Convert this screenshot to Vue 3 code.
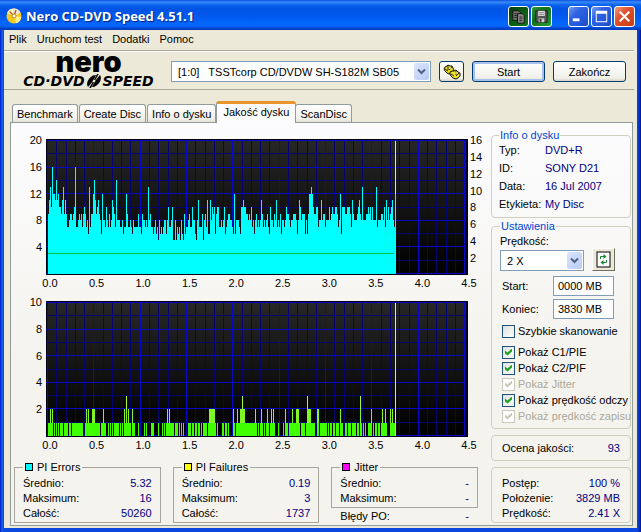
<script setup>
import { ref } from 'vue'

const menu = ['Plik', 'Uruchom test', 'Dodatki', 'Pomoc']
const tabs = ['Benchmark', 'Create Disc', 'Info o dysku', 'Jakość dysku', 'ScanDisc']
const activeTab = ref('Jakość dysku')
const drive = '[1:0]\u00a0\u00a0 TSSTcorp CD/DVDW SH-S182M SB05'

const xTicks = ['0.0', '0.5', '1.0', '1.5', '2.0', '2.5', '3.0', '3.5', '4.0', '4.5']

// One hexadecimal digit per sample; g stands for 16.
const errorSamples = (
  '9bdagccbebcaa9bd9b97789989' + 'ag77898979a9786d799ceb9ab9' + '86c887a87978ba97e8887786' +
  '77c97787687777977698878' + '7d8977678675867678868a778a' + '558576758659677897' +
  '7a88658b77795897b66b8a9a' + '69aa77878a678998876c68887' +
  '6aabaa99898a78689787' + '8b97878976a88798b787968878a9' + '987889998' + '68ba8999686' +
  '9ccdca99aa788b89978' + '88a89a99aa978c6aaa99aaa97b988' + '89ab98d88899a9a8a888d7888998a7b8a89ab87c88'
).split('').map((c) => (c === 'g' ? 16 : parseInt(c, 16))).slice(0, 348)

const gaps = new Set([
  5, 7, 9, 11, 15, 20, 23, 35, 36, 52, 58, 59, 61, 63, 65, 71, 73, 75, 83, 87, 88, 89, 91, 92, 93, 94, 95, 97,
  99, 100, 101, 102, 106, 107, 108, 109, 111, 112, 113, 115, 117, 126, 130, 132, 134, 136, 137, 138, 139,
  143, 146, 149, 152, 154, 159, 168, 170, 171, 172, 173, 176, 179, 181, 182, 183, 184, 187, 209, 211, 215,
  217, 221, 227, 228, 229, 231, 232, 233, 234, 236, 240, 252, 257, 267, 268, 271, 279, 281, 284, 287, 291,
  295, 296, 299, 303, 308, 311, 314, 316, 318, 319, 324, 326, 329, 332, 339, 340, 341
])
const twos = new Set([
  2, 4, 38, 40, 44, 45, 46, 55, 76, 80, 84, 119, 121, 161, 162, 163, 164, 165, 166, 185, 189, 192, 193, 195,
  196, 207, 213, 219, 223, 225, 237, 244, 248, 249, 250, 260, 261, 262, 269, 270, 292, 323, 334, 337, 342, 344
])
const threes = new Set([78, 194, 259, 312])
const failureSamples = Array.from({ length: 348 }, (_, i) =>
  threes.has(i) ? 3 : twos.has(i) ? 2 : gaps.has(i) ? 0 : 1
)

function steps(samples, unit, cap = 99) {
  let d = 'M2 135'
  samples.forEach((v, i) => {
    d += `V${135 - Math.round(Math.min(v, cap) * unit)}H${i + 3}`
  })
  return d + 'V135Z'
}

const columns = Array.from({ length: 46 }, (_, i) => ({ at: Math.round(2 + i * 9.27), major: i % 5 === 0 }))
const rows = Array.from({ length: 11 }, (_, i) => ({ at: Math.round(2 + i * 13.3), major: i % 2 === 0 }))

const charts = [
  {
    id: 'pie',
    left: ['20', '16', '12', '8', '4'],
    right: ['16', '14', '12', '10', '8', '6', '4', '2'],
    layers: [{ d: steps(errorSamples, 6.7), fill: '#00ffff' }],
    speed: true
  },
  {
    id: 'pif',
    left: ['10', '8', '6', '4', '2'],
    right: [],
    layers: [
      { d: steps(failureSamples, 13.3), fill: '#a8f840' },
      { d: steps(failureSamples, 13.3, 2), fill: '#80f828' },
      { d: steps(failureSamples, 13.3, 1), fill: '#40ff00' }
    ],
    speed: false
  }
]

const stats = [
  { name: 'PI Errors', tone: 'cyan', rows: [['Średnio:', '5.32'], ['Maksimum:', '16'], ['Całość:', '50260']] },
  { name: 'PI Failures', tone: 'yellow', rows: [['Średnio:', '0.19'], ['Maksimum:', '3'], ['Całość:', '1737']] },
  { name: 'Jitter', tone: 'magenta', rows: [['Średnio:', '-'], ['Maksimum:', '-']], extra: ['Błędy PO:', '-'] }
]

const disc = [['Typ:', 'DVD+R'], ['ID:', 'SONY D21'], ['Data:', '16 Jul 2007'], ['Etykieta:', 'My Disc']]
const progress = [['Postęp:', '100 %'], ['Położenie:', '3829 MB'], ['Prędkość:', '2.41 X']]

const start = ref('0000 MB')
const end = ref('3830 MB')
const options = ref([
  { label: 'Szybkie skanowanie', on: false, off: false },
  { label: 'Pokaż C1/PIE', on: true, off: false },
  { label: 'Pokaż C2/PIF', on: true, off: false },
  { label: 'Pokaż Jitter', on: true, off: true },
  { label: 'Pokaż prędkość odczy', on: true, off: false },
  { label: 'Pokaż prędkość zapisu', on: true, off: true }
])
</script>

<template>
  <div class="window">
    <header class="titlebar">
      <svg class="app-icon" viewBox="0 0 16 16" aria-hidden="true">
        <circle cx="8" cy="8" r="7.5" fill="#f4c81c" />
        <path d="M8 8L1 5A7.5 7.5 0 0 1 7 .6Z" fill="#fff6c0" />
        <path d="M8 8L7 .6A7.5 7.5 0 0 1 14.500 4.500Z" fill="#f2e8e0" />
        <path d="M8 8L15.400 9A7.500 7.500 0 0 1 10 15.300Z" fill="#fff08a" />
        <path d="M8 8L3.500 3.500M8 8L10 2" stroke="#b0502c" stroke-width="1.300" />
        <circle cx="8" cy="8" r="2" fill="#fff" stroke="#b88a10" />
      </svg>
      <h1>Nero CD-DVD Speed 4.51.1</h1>
      <div class="captions">
        <button class="cap green dark" aria-label="Kopiuj">
          <svg viewBox="0 0 20 20"><path d="M4 4h6l2 2v8H4z" fill="#777" stroke="#111" /><path d="M9 7h5l2 2v8H9z" fill="#888" stroke="#111" /><path d="M5.500 7h3M5.500 9h3M5.500 11h3M11 10.500h3M11 12.500h3M11 14.500h3" stroke="#222" /></svg>
        </button>
        <button class="cap green" aria-label="Zapisz">
          <svg viewBox="0 0 20 20"><path d="M4 4h12v12H5l-1-1z" fill="#555" stroke="#222" /><path d="M6.500 4h7v5.500h-7z" fill="#d8d8d8" /><path d="M7.500 6h5M7.500 8h5" stroke="#888" /><path d="M7 12h6v4H7z" fill="#ccc" /><path d="M8 12.500h2v3H8z" fill="#333" /></svg>
        </button>
        <span class="cap-space"></span>
        <button class="cap" aria-label="Minimalizuj">
          <svg viewBox="0 0 20 20"><path d="M4 12h7v3H4z" fill="#fff" /></svg>
        </button>
        <button class="cap" aria-label="Maksymalizuj">
          <svg viewBox="0 0 20 20"><path d="M4 4h12v12H4zM5 7v8h10V7z" fill="#fff" fill-rule="evenodd" /></svg>
        </button>
        <button class="cap close" aria-label="Zamknij">
          <svg viewBox="0 0 20 20"><path d="M5 5L15 15M15 5L5 15" stroke="#fff" stroke-width="2.200" /></svg>
        </button>
      </div>
    </header>

    <div class="client">
      <nav class="menu">
        <a v-for="m in menu" :key="m" href="#">{{ m }}</a>
      </nav>

      <div class="toolbar">
        <div class="logo">
          <span class="brand">nero</span>
          <span class="product">
            <span>CD·DVD</span>
            <svg viewBox="0 0 16 14" aria-hidden="true">
              <path d="M2 13C-1 9 4 1 10 1L7 7zM14 1C17 5 12 13 6 13L9 7z" fill="#000" />
              <path d="M12 0L4 14" stroke="#000" stroke-width="1.500" />
              <circle cx="8" cy="7" r="1.300" fill="#ece9d8" />
            </svg>
            <span>SPEED</span>
          </span>
        </div>
        <div class="combo drive">
          <select aria-label="Napęd"><option>{{ drive }}</option></select>
          <span class="arrow"><svg viewBox="0 0 9 7"><path d="M1 1.500L4.500 5L8 1.500" fill="none" stroke="#4d6185" stroke-width="2" /></svg></span>
        </div>
        <button class="btn icon-btn" aria-label="Opcje">
          <svg viewBox="0 0 18 16">
            <path d="M2 3l2-1 1-1 2 1 2 0 1 2 1 2-1 2-2 2-2 0-2-1-2-2-1-2z" fill="#e8dc20" stroke="#111" />
            <path d="M7 8l2-1 2 0 2-1 2 2 2 1 0 3-2 2-2 1-3-1-2-2-1-2z" fill="#f0e428" stroke="#111" />
            <path d="M5 2v4M9 3l-3 3M13 7v4M16 9l-3 3M2 5l3 2M8 10l3 2" stroke="#332c00" />
            <path d="M6 4h2M12 9h2" stroke="#fffcc0" />
          </svg>
        </button>
        <button class="btn default">Start</button>
        <button class="btn">Zakończ</button>
      </div>

      <div class="tabs" role="tablist">
        <button
          v-for="t in tabs" :key="t" role="tab" class="tab"
          :class="{ active: t === activeTab }" :aria-selected="t === activeTab" @click="activeTab = t"
        >{{ t }}</button>
      </div>

      <main class="panel">
        <section class="results">
          <div v-for="c in charts" :key="c.id" class="chart">
            <div class="axis left"><span v-for="l in c.left" :key="l">{{ l }}</span></div>
            <svg class="plot" viewBox="0 0 422 136" preserveAspectRatio="none" shape-rendering="crispEdges">
              <defs>
                <linearGradient :id="c.id + '-bg'" x1="0" y1="0" x2="0" y2="1">
                  <stop offset="0" stop-color="#262626" /><stop offset="1" stop-color="#000" />
                </linearGradient>
              </defs>
              <rect width="422" height="136" fill="#000014" />
              <rect x="2" y="2" width="418" height="133" :fill="`url(#${c.id}-bg)`" />
              <g v-for="major in [false, true]" :key="String(major)" :fill="major ? '#0808c4' : '#04046c'">
                <rect v-for="x in columns.filter((g) => g.major === major)" :key="'x' + x.at" :x="x.at - 1" y="2" width="1" height="133" />
                <rect v-for="y in rows.filter((g) => g.major === major)" :key="'y' + y.at" x="0" :y="y.at - 1" width="420" height="1" />
              </g>
              <rect x="0" y="0" width="422" height="1" fill="#000014" />
              <rect x="420" y="0" width="2" height="136" fill="#000014" />
              <path v-for="l in c.layers" :key="l.fill" :d="l.d" :fill="l.fill" />
              <rect x="0" y="135" width="422" height="1" fill="#000014" />
              <rect v-if="c.speed" x="2" y="114" width="346" height="1" fill="#00c83c" />
              <rect x="349" y="2" width="1" :height="c.speed ? 53 : 133" fill="#dcdcd4" />
            </svg>
            <div class="axis right"><span v-for="l in c.right" :key="l">{{ l }}</span></div>
            <div class="axis bottom"><span v-for="l in xTicks" :key="l">{{ l }}</span></div>
          </div>

          <div class="stats">
            <div v-for="s in stats" :key="s.name" class="stat">
              <fieldset class="square">
                <legend><i class="swatch" :class="s.tone"></i>{{ s.name }}</legend>
                <p v-for="r in s.rows" :key="r[0]" class="pair"><span>{{ r[0] }}</span><b>{{ r[1] }}</b></p>
              </fieldset>
              <p v-if="s.extra" class="pair extra"><span>{{ s.extra[0] }}</span><b>{{ s.extra[1] }}</b></p>
            </div>
          </div>
        </section>

        <aside class="side">
          <fieldset class="info">
            <legend>Info o dysku</legend>
            <p v-for="r in disc" :key="r[0]"><span>{{ r[0] }}</span><b>{{ r[1] }}</b></p>
          </fieldset>

          <fieldset class="settings">
            <legend>Ustawienia</legend>
            <label for="speed">Prędkość:</label>
            <div class="speed-row">
              <div class="combo">
                <select id="speed"><option>2 X</option></select>
                <span class="arrow"><svg viewBox="0 0 9 7"><path d="M1 1.500L4.500 5L8 1.500" fill="none" stroke="#4d6185" stroke-width="2" /></svg></span>
              </div>
              <button class="refresh" aria-label="Odśwież">
                <svg viewBox="0 0 15 17">
                  <rect x="1" y="1" width="13" height="15" fill="#fff" stroke="#000" />
                  <path d="M4.500 8V5.500H8M10.500 9v2.500H7" fill="none" stroke="#188830" />
                  <path d="M7.500 3L10.500 5.500L7.500 8zM7.500 9L4.500 11.500l3 2.500z" fill="#188830" />
                </svg>
              </button>
            </div>
            <div class="fields">
              <div class="field"><label for="start">Start:</label><input id="start" v-model="start" type="text"></div>
              <div class="field"><label for="end">Koniec:</label><input id="end" v-model="end" type="text"></div>
            </div>
            <div class="checks">
              <label v-for="o in options" :key="o.label" :class="{ off: o.off }">
                <input v-model="o.on" type="checkbox" :disabled="o.off"><span>{{ o.label }}</span>
              </label>
            </div>
          </fieldset>

          <div class="box"><p class="pair"><span>Ocena jakości:</span><b>93</b></p></div>
          <div class="box progress">
            <p v-for="r in progress" :key="r[0]" class="pair"><span>{{ r[0] }}</span><b>{{ r[1] }}</b></p>
          </div>
        </aside>
      </main>
    </div>
  </div>
</template>

<style>
body { margin: 0; background: #ece9d8; }
</style>

<style scoped>
* { box-sizing: border-box; }
.window {
  min-height: 100vh;
  display: flex;
  flex-direction: column;
  padding: 0 4px 4px;
  background: linear-gradient(90deg, #0019cf 0, #1660e8 2px, #0a48e0 4px, #0a48e0 calc(100% - 4px), #0838c8 calc(100% - 2px), #00138c 100%);
  font: 11px/14px "Liberation Sans", Arial, sans-serif;
  color: #000;
}
button, input, select { font: inherit; color: inherit; margin: 0; }
p { margin: 0; }
b { font-weight: normal; color: #000080; }

.titlebar {
  height: 30px;
  margin: 0 -4px;
  padding: 2px 6px 0;
  display: flex;
  align-items: center;
  background: linear-gradient(#0a4be0 0, #3a8cf8 2px, #0a62ee 5px, #0054e3 9px, #0058ee 16px, #0366fc 23px, #0564f8 26px, #0048d0 28px, #0038b8 30px);
}
.app-icon { width: 16px; height: 16px; }
h1 {
  flex: 1;
  margin: 0 0 0 4px;
  font: bold 13px/18px "Open Sans", sans-serif;
  color: #fff;
  text-shadow: 1px 1px 1px #0a1f80;
}
.captions { display: flex; gap: 2px; }
.cap-space { width: 12px; }
.cap {
  width: 21px;
  height: 21px;
  padding: 0;
  border: 1px solid #fff;
  border-radius: 3px;
  background: linear-gradient(135deg, #7a9cf0, #2f63e4 35%, #2358d8 70%, #1a4cc0);
}
.cap svg { display: block; width: 19px; height: 19px; }
.cap.green { background: linear-gradient(135deg, #2c9838, #107018 40%, #28a034); }
.cap.green.dark { background: linear-gradient(135deg, #083c10, #0c5c14 50%, #107820); }
.cap.close { background: linear-gradient(135deg, #f09c80, #e0502c 40%, #c83c14); }

.client { flex: 1; display: flex; flex-direction: column; background: #ece9d8; }
.menu {
  height: 21px;
  display: flex;
  align-items: center;
  gap: 10px;
  margin-right: 3px;
  padding: 0 5px 2px;
  border-bottom: 1px solid #aca899;
}
.menu a { color: inherit; text-decoration: none; }
.toolbar {
  display: flex;
  align-items: center;
  gap: 8px;
  height: 39px;
  margin-right: 3px;
  padding: 2px 8px 0 10px;
  border-top: 1px solid #fff;
  border-bottom: 1px solid #aca899;
}
.logo { width: 149px; display: flex; flex-direction: column; align-items: center; }
.brand { height: 21px; margin-top: -2px; font: 900 29px/20px Inter, "Liberation Sans", sans-serif; }
.product { display: flex; align-items: center; gap: 1px; font: italic bold 14px/16px "DejaVu Sans", sans-serif; }
.product svg { width: 16px; height: 14px; }

.combo { position: relative; display: flex; }
.drive { flex: 1; min-width: 0; }
.combo select {
  appearance: none;
  width: 100%;
  height: 21px;
  padding: 0 18px 0 6px;
  border: 1px solid #7f9db9;
  border-radius: 0;
  background: #fff;
}
.arrow {
  position: absolute;
  top: 2px;
  right: 2px;
  bottom: 2px;
  width: 15px;
  display: flex;
  align-items: center;
  justify-content: center;
  border-radius: 2px;
  background: linear-gradient(135deg, #dce6fd, #b8cbf6);
  pointer-events: none;
}
.arrow svg { width: 9px; height: 7px; }
.btn {
  width: 73px;
  height: 21px;
  padding: 0;
  border: 1px solid #003c74;
  border-radius: 3px;
  background: linear-gradient(#fff, #f0f0ea 85%, #d6d0c5);
}
.btn.default { box-shadow: inset 0 0 0 2px #a8c0ee; }
.icon-btn { width: 25px; }
.icon-btn svg { display: block; width: 18px; height: 16px; margin: 0 auto; }

.tabs { display: flex; align-items: flex-end; height: 32px; padding-left: 8px; position: relative; }
.tab {
  height: 18px;
  padding: 0 4px;
  margin-right: 1px;
  border: 1px solid #919b9c;
  border-bottom: 0;
  border-radius: 3px 3px 0 0;
  background: linear-gradient(#fff, #f0efe8 80%, #e4e2d8);
}
.tab.active {
  height: 22px;
  margin: 0 -1px -1px;
  padding: 0 6px 4px;
  border-top: 3px solid #e8952c;
  background: #fcfcfe;
}
.panel {
  flex: 1;
  display: flex;
  margin: 0 4px 2px 6px;
  border: 1px solid #919b9c;
  background: linear-gradient(#fcfcfe, #f4f3ee 60%);
}
.results { flex: 1; min-width: 0; padding-top: 16px; display: flex; flex-direction: column; }
.chart { display: grid; grid-template-columns: 35px 1fr 23px; margin-bottom: 10px; }
.plot { width: 100%; height: 136px; display: block; }
.axis { display: flex; justify-content: space-between; }
.axis.left { flex-direction: column; height: 121px; margin-top: -6px; padding-right: 4px; text-align: right; }
.axis.right { flex-direction: column; height: 132px; margin-top: -6px; padding-left: 2px; }
.axis.bottom { grid-column: 2; margin: 1px -9px 1px -4px; }
.axis.bottom span { width: 16px; text-align: center; }

.stats { display: grid; grid-template-columns: repeat(3, 1fr); gap: 12px; padding: 0 13px 0 3px; margin-top: -3px; }
fieldset { min-width: 0; margin: 0; }
.square { border: 1px solid #a8a69c; padding: 2px 8px 1px; }
.square legend { display: flex; align-items: center; gap: 4px; padding: 0 2px; }
.swatch { width: 8px; height: 8px; border: 1px solid #000; }
.cyan { background: #00ffff; }
.yellow { background: #ffff00; }
.magenta { background: #ff00ff; }
.pair { display: flex; justify-content: space-between; line-height: 15px; }
.extra { padding: 1px 9px 0; }

.side { width: 140px; margin-right: 1px; padding: 5px 0 1px; display: flex; flex-direction: column; }
.side fieldset, .box { border: 1px solid #d0d0bf; border-radius: 4px; }
.side legend { padding: 0 1px; color: #0046d5; }
.info { padding: 0 7px 4px; margin-bottom: 1px; }
.info p { display: grid; grid-template-columns: 46px 1fr; line-height: 18px; }
.info legend { margin-bottom: -1px; }
.settings { padding: 0 0 4px 8px; }
.settings legend { margin-bottom: 1px; }
.settings > label { display: block; }
.speed-row { display: flex; gap: 8px; align-items: flex-end; }
.speed-row .combo { width: 84px; }
.refresh {
  width: 23px;
  height: 23px;
  padding: 0;
  border: 1px solid;
  border-color: #fff #716f64 #716f64 #fff;
  background: #ece9d8;
}
.refresh svg { display: block; width: 15px; height: 17px; margin: 0 auto; }
.fields { display: grid; gap: 3px; padding: 5px 16px 4px 2px; }
.field { display: flex; justify-content: space-between; align-items: center; }
.field input { width: 61px; height: 20px; padding: 0 4px; border: 1px solid #7f9db9; background: #fff; }
.checks { padding-left: 2px; }
.checks label { display: flex; align-items: center; gap: 3px; height: 16px; white-space: nowrap; }
.checks label:first-child { margin-bottom: 5px; }
.checks input {
  appearance: none;
  flex: none;
  position: relative;
  width: 13px;
  height: 13px;
  border: 1px solid #1c5180;
  background: linear-gradient(135deg, #e0e0da, #fff);
}
.checks input:checked::after {
  content: "";
  position: absolute;
  inset: 2px;
  background: #21a121;
  clip-path: polygon(0 29%, 36% 58%, 100% 0, 100% 42%, 36% 100%, 0 71%);
}
.checks .off { color: #aca899; }
.checks .off input { border-color: #cac8bb; background: #fff; }
.checks .off input::after { background: #cac8bb; }
.box { margin-top: 6px; padding: 5px 10px 4px; }
.progress { padding: 8px 10px 1px; }
</style>
